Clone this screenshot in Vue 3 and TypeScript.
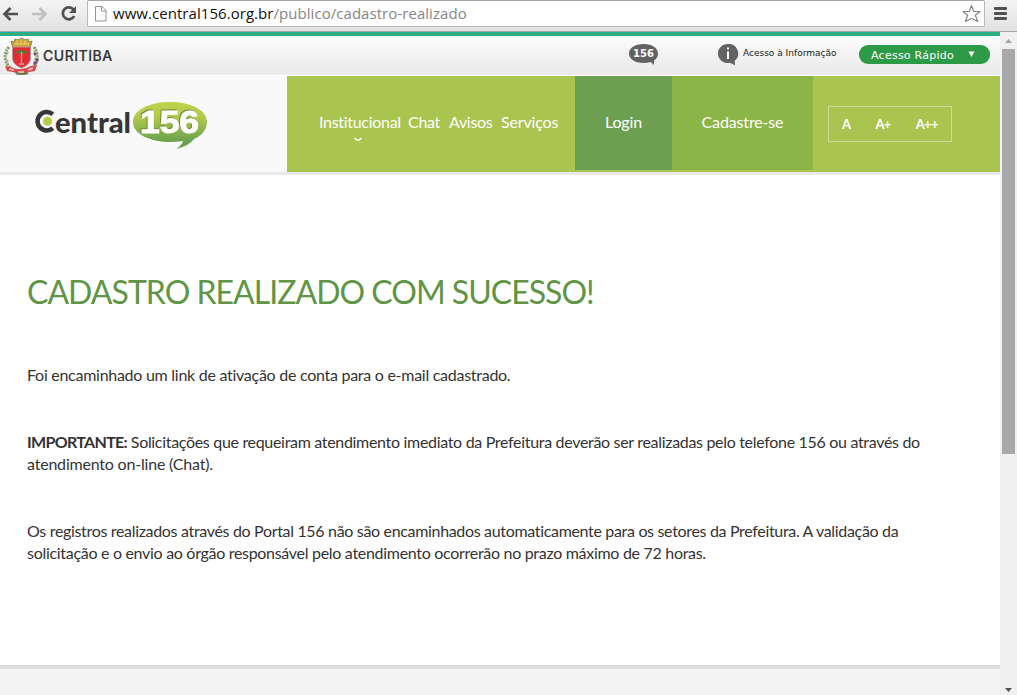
<script setup lang="ts">
interface Line { text: string; strong?: string; spacing: number }
const paragraphs: Line[][] = [
  [{ text: 'Foi encaminhado um link de ativação de conta para o e-mail cadastrado.', spacing: -0.27 }],
  [
    { strong: 'IMPORTANTE:', text: ' Solicitações que requeiram atendimento imediato da Prefeitura deverão ser realizadas pelo telefone 156 ou através do', spacing: -0.315 },
    { text: 'atendimento on-line (Chat).', spacing: -0.2 },
  ],
  [
    { text: 'Os registros realizados através do Portal 156 não são encaminhados automaticamente para os setores da Prefeitura. A validação da', spacing: -0.327 },
    { text: 'solicitação e o envio ao órgão responsável pelo atendimento ocorrerão no prazo máximo de 72 horas.', spacing: -0.3 },
  ],
]
</script>

<template>
  <div class="window">
    <div class="toolbar">
      <svg class="nav-icons" width="87" height="31" viewBox="0 0 87 31">
        <path d="M18 14H5M10.500 8L4.500 14l6 6" fill="none" stroke="#505050" stroke-width="2.700" />
        <path d="M32 14h13M39.500 8l6 6-6 6" fill="none" stroke="#c0c0c0" stroke-width="2.500" />
        <path d="M73.500 9.500A6 6 0 1 0 74.200 16" fill="none" stroke="#505050" stroke-width="2.700" />
        <path d="M76 6v7h-7z" fill="#505050" />
      </svg>
      <div class="address">
        <svg width="24" height="25" viewBox="0 0 24 25">
          <path d="M7.500 5.500h6.500l4 4v10.500H7.500zM13.500 5.500v4.500h4.500" fill="#fafafa" stroke="#929292" />
        </svg>
        <span class="url">www.central156.org.br<i>/publico/cadastro-realizado</i></span>
        <svg class="star" width="20" height="20" viewBox="0 0 20 20">
          <path d="M9.500 1.500l2.200 6h6.300l-4.700 3.700 2.400 6.300-6.200-3-6.200 3 2.400-6.300L1 7.500h6.300z" fill="#fff" stroke="#858585" stroke-width="1.200" stroke-linejoin="round" />
        </svg>
      </div>
      <div class="menu"><b /><b /><b /></div>
    </div>

    <div class="viewport">
      <div class="page">
        <div class="citybar">
          <svg class="crest" width="40" height="39" viewBox="0 0 40 39">
            <g fill="none" stroke="#7c9a60" stroke-width="3" stroke-dasharray="2 1">
              <path d="M8 10Q0 20 9 31" /><path d="M33 10Q40 21 32 31" />
            </g>
            <path d="M5 12l2 4-3 4 3 4-2 3M35 11l-2 4 3 4-3 4" fill="none" stroke="#b5b994" stroke-width="1.300" />
            <g fill="#6e477f"><circle cx="34" cy="17" r="1.500" /><circle cx="36" cy="23" r="1.700" /><circle cx="34" cy="26" r="1.800" /><circle cx="24" cy="35" r="1.500" /></g>
            <path d="M10 4l3 1 1-3 3 1 3.500-2 3.500 2 3-1 1 3 3-1-2 8H12z" fill="#c9a63c" stroke="#786128" stroke-width=".7" />
            <path d="M13 7h15M16 3v4m4-5v5m4-4v4" stroke="#f0d06b" />
            <path d="M11.500 10h18v12q-1 6-9 9-8-3-9-9z" fill="#e32c31" stroke="#bc9098" />
            <path d="M14.500 15q6-4 12 0l-1 1.500h-10z" fill="#5c7536" />
            <path d="M20.500 15v11M18 27h5" stroke="#d8a49b" stroke-width="1.300" />
            <path d="M4 29l6 1q10 5 20-1l6-1-2 6-6 1q-7 4-16 0l-6-1z" fill="#d9484c" />
            <path d="M8 32l5 1m4 2h6m4-2l5-2" stroke="#f3cdcd" stroke-width="1.500" />
            <path d="M15 36q5 2.500 12 0" fill="none" stroke="#668350" stroke-width="2" />
          </svg>
          <span class="city">CURITIBA</span>
          <svg class="phone" width="30" height="22" viewBox="0 0 30 22">
            <path d="M14.500 0C6 0 0 4 0 9.500S6 19 14.500 19q4 0 7-1 2 1 2.800 3 1.200-2 .7-4.500 4-2.500 4-7C29 4 23 0 14.500 0" fill="#626262" />
            <text x="14.600" y="13.200" text-anchor="middle" textLength="21" lengthAdjust="spacingAndGlyphs">156</text>
          </svg>
          <svg class="info-icon" width="21" height="22" viewBox="0 0 21 22">
            <path d="M10 0A10 9.500 0 1 0 12 18.800l5 2.500-.3-4.500A9.500 9.500 0 0 0 10 0" fill="#626262" />
            <path d="M9 3.500h2v2H9zM9 7.500h2V15H9z" fill="#fff" />
          </svg>
          <span class="info">Acesso à Informação</span>
          <button class="quick"><span>Acesso Rápido</span><svg width="8" height="7" viewBox="0 0 8 7"><path d="M.5.5h6L3.500 6z" fill="#fff" /></svg></button>
        </div>

        <header class="header">
          <div class="brand">
            <svg width="176" height="52" viewBox="0 0 176 52">
              <defs><linearGradient id="balloon" x2="0" y2="1"><stop stop-color="#bfd34b" /><stop offset=".3" stop-color="#b3ca4c" /><stop offset=".8" stop-color="#6fa54d" /><stop offset="1" stop-color="#62a052" /></linearGradient></defs>
              <path d="M17.800 13.300A9.200 9.200 0 1 0 17.800 27.200" fill="none" stroke="#383536" stroke-width="4.500" />
              <circle cx="12.500" cy="20.300" r="4.500" fill="#b8cc48" />
              <text class="logo-word" x="20" y="31.700" textLength="76" lengthAdjust="spacingAndGlyphs">entral</text>
              <path d="M135 1c-21 0-37 8-37 20 0 13 19 20 37 20q8 0 13-1-1 4-7 8 13-3 18-10c7-3 13-9 13-17 0-12-16-20-37-20" fill="url(#balloon)" />
              <text class="logo-num" x="105" y="31.500" textLength="59" lengthAdjust="spacingAndGlyphs">156</text>
            </svg>
          </div>
          <nav class="nav">
            <a class="inst">Institucional<svg width="8" height="5" viewBox="0 0 8 5"><path d="M.5 1q3.500 4.500 7 0" fill="none" stroke="#fff" stroke-width="1.400" /></svg></a>
            <a class="chat">Chat</a><a class="avisos">Avisos</a><a class="servicos">Serviços</a>
          </nav>
          <a class="login"><span>Login</span></a>
          <a class="register"><span>Cadastre-se</span></a>
          <div class="sizes"><span>A</span><span>A+</span><span>A++</span></div>
        </header>

        <main class="content">
          <h1>CADASTRO REALIZADO COM SUCESSO!</h1>
          <p v-for="(p, i) in paragraphs" :key="i">
            <span v-for="(line, j) in p" :key="j" class="line" :style="{ letterSpacing: line.spacing + 'px' }"><strong v-if="line.strong">{{ line.strong }}</strong>{{ line.text }}</span>
          </p>
        </main>
        <footer class="footer" />
      </div>
      <div class="scrollbar">
        <svg width="17" height="17" viewBox="0 0 17 17"><path d="M5 11h7L8.500 7z" fill="#a3a3a3" /></svg>
        <div class="thumb" />
        <svg class="down" width="17" height="17" viewBox="0 0 17 17"><path d="M5 10h7L8.500 14z" fill="#505050" /></svg>
      </div>
    </div>
  </div>
</template>

<style>
body { margin: 0; overflow: hidden; }
</style>

<style scoped>
* { box-sizing: border-box; }
.window { width: 1017px; height: 695px; display: flex; flex-direction: column; overflow: hidden; background: #fff; font-family: Lato, "Liberation Sans", sans-serif; color: #333; }
.toolbar { height: 32px; flex: none; display: flex; background: linear-gradient(#f4f4f4, #e1e1e1); border-bottom: 1px solid #a5a5a5; }
.address { width: 898px; height: 27px; display: flex; background: #fff; border: 1px solid #b8b8b8; border-top-color: #a5a5a5; border-radius: 2px; }
.url { flex: 1; margin-left: 1px; font: 15px/25px "Open Sans", "Noto Sans", sans-serif; letter-spacing: .05px; color: #111; white-space: nowrap; }
.url i { font-style: normal; color: #858585; }
.star { margin: 3px 2px 0 0; }
.menu { display: flex; flex-direction: column; gap: 2px; padding: 7px 0 0 9px; }
.menu b { width: 13px; height: 3px; border-radius: 1px; background: #505050; }
.viewport { display: flex; flex: 1; min-height: 0; }
.page { width: 1000px; display: flex; flex-direction: column; }
.citybar { height: 43px; flex: none; display: flex; padding-top: 4px; background: linear-gradient(#12b39b 0 1px, #3fa873 1px 3px, #12b39b 3px 4px, transparent 4px), linear-gradient(#fdfdfd 10%, #ebebeb 85%); }
.crest { margin: 1px 0 0 1px; flex: none; }
.city { width: 588px; flex: none; padding-left: 2px; font: 500 14px/39px Inter, sans-serif; letter-spacing: .5px; color: #333; -webkit-text-stroke: .2px #333; }
.phone { flex: none; margin: 8px 59px 0 0; }
.phone text { font: bold 10px "DejaVu Sans", sans-serif; fill: #fff; }
.info-icon { flex: none; margin: 8px 4px 0 0; }
.info { width: 116px; flex: none; font: 9px/34px "DejaVu Sans", sans-serif; white-space: nowrap; color: #222; }
.quick { width: 131px; height: 19px; flex: none; margin-top: 9px; padding: 0 14px 0 12px; display: flex; align-items: center; justify-content: space-between; border: 0; border-radius: 9px; background: #2d9a47; color: #fff; font: 11px/19px "DejaVu Sans", sans-serif; letter-spacing: .25px; white-space: nowrap; }
.quick span { padding-top: 1px; }
.header { height: 100px; flex: none; display: flex; border-top: 1px solid #fff; border-bottom: 3px solid #e9e9e9; background: #a9c44f; }
.brand { width: 287px; padding: 25px 0 0 35px; background: #f9f9f9; }
.brand svg { display: block; }
.logo-word { font: 900 29px Lato, sans-serif; fill: #383536; }
.logo-num { font: bold 31px "Liberation Sans", sans-serif; fill: #fff; stroke: #fff; stroke-width: 1px; filter: drop-shadow(-1px -1px 0 #758a3e); }
.nav { width: 288px; padding: 34px 0 0 32px; display: flex; color: #fff; font-size: 16px; line-height: 23px; letter-spacing: -.3px; white-space: nowrap; }
.inst { width: 89px; display: flex; flex-direction: column; }
.inst svg { margin: 4px 0 0 35px; }
.chat { width: 41px; }
.avisos { width: 52px; }
.servicos { letter-spacing: -.15px; }
.login, .register { height: 94px; text-align: center; color: #fff; font-size: 16px; line-height: 91px; letter-spacing: -.15px; }
.login { width: 97px; background: #6c9f50; }
.register { width: 141px; background: #8cb548; }
.sizes { width: 124px; height: 36px; margin: 30px 0 0 15px; padding: 0 13px; display: flex; justify-content: space-between; border: 1px solid #cddc9b; color: #fff; font-size: 13px; font-weight: bold; line-height: 35px; letter-spacing: -.6px; }
.content { height: 490px; flex: none; padding: 93px 26px 0 27px; }
h1 { margin: 0; font-size: 32px; font-weight: 400; line-height: 48px; letter-spacing: -.98px; color: #5f9545; white-space: nowrap; }
p { margin: 0 0 45px; font-size: 16px; line-height: 22px; }
strong { letter-spacing: -.68px; }
h1 + p { margin-top: 48px; }
.line { display: table; white-space: nowrap; }
.footer { flex: 1; border-top: 4px solid #dcdcdc; background: #f4f4f4; }
.scrollbar { width: 17px; display: flex; flex-direction: column; background: #f0f0f0; }
.thumb { width: 13px; height: 405px; margin-left: 2px; background: #a8a8a8; }
.down { margin-top: auto; }
</style>
